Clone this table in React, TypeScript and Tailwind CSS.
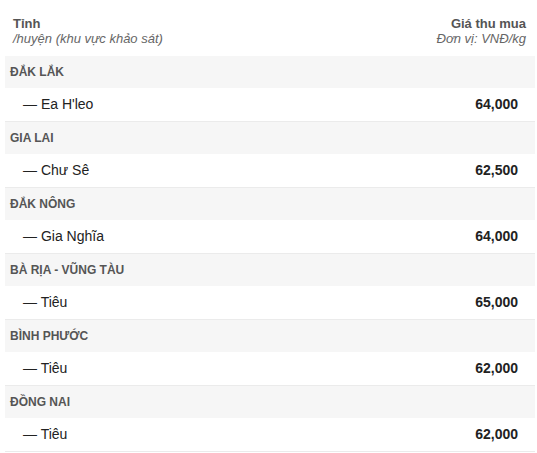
import React from "react";

const data: { province: string; items: { name: string; price: string }[] }[] = [
  { province: "ĐẮK LẮK", items: [{ name: "Ea H'leo", price: "64,000" }] },
  { province: "GIA LAI", items: [{ name: "Chư Sê", price: "62,500" }] },
  { province: "ĐẮK NÔNG", items: [{ name: "Gia Nghĩa", price: "64,000" }] },
  { province: "BÀ RỊA - VŨNG TÀU", items: [{ name: "Tiêu", price: "65,000" }] },
  { province: "BÌNH PHƯỚC", items: [{ name: "Tiêu", price: "62,000" }] },
  { province: "ĐỒNG NAI", items: [{ name: "Tiêu", price: "62,000" }] },
];

export default function App() {
  return (
    <div
      className="w-[537px] h-[453px] bg-white overflow-hidden"
      style={{ fontFamily: '"Liberation Sans", Arial, sans-serif' }}
    >
      <div className="ml-[5px] mr-[2px]">
        <div className="flex justify-between h-[56px] pt-[16px] pl-[8px] pr-[9px] text-[13px] leading-[15px]">
          <div>
            <div className="font-bold text-[#555]">Tỉnh</div>
            <div className="italic text-[#666]">/huyện (khu vực khảo sát)</div>
          </div>
          <div className="text-right">
            <div className="font-bold text-[#555]">Giá thu mua</div>
            <div className="italic text-[#666]">Đơn vị: VNĐ/kg</div>
          </div>
        </div>
        {data.map((g) => (
          <div key={g.province}>
            <div className="h-[32px] bg-[#f6f6f6] flex items-center pl-[5px] text-[12px] font-bold text-[#555]">
              {g.province}
            </div>
            {g.items.map((it) => (
              <div
                key={it.name}
                className="h-[34px] border-b border-[#ebebeb] flex items-center justify-between pl-[18px] pr-[17px]"
              >
                <span className="text-[14px] text-[#222]">— {it.name}</span>
                <span className="text-[14px] font-bold text-[#222]">{it.price}</span>
              </div>
            ))}
          </div>
        ))}
      </div>
    </div>
  );
}
